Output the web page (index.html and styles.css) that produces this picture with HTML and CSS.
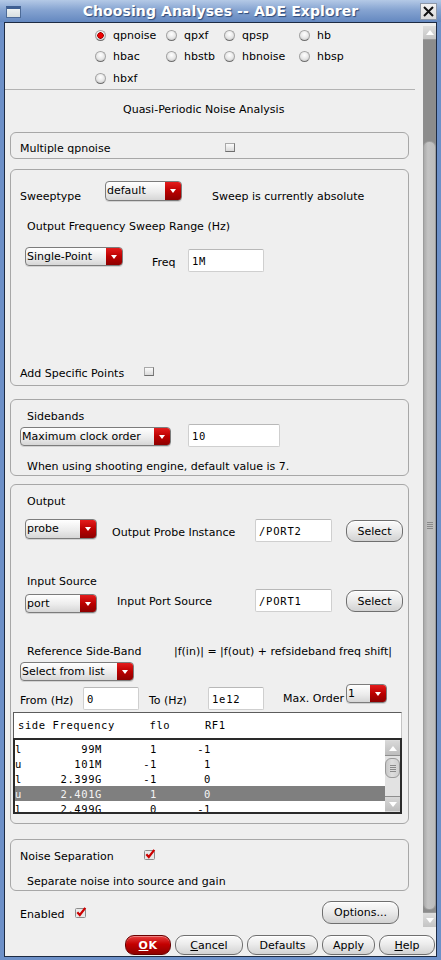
FILE: index.html
```html
<!DOCTYPE html>
<html>
<head>
<meta charset="utf-8">
<title>Choosing Analyses -- ADE Explorer</title>
<link rel="stylesheet" href="styles.css">
</head>
<body>
<div class="window">
  <div class="titlebar">
    <span class="wicon"></span>
    <span class="title">Choosing Analyses -- ADE Explorer</span>
    <span class="close">
      <svg width="15" height="15" viewBox="0 0 15 15"><path d="M3 3 L12 12 M12 3 L3 12" stroke="#111" stroke-width="2" fill="none"/></svg>
    </span>
  </div>
  <div class="outer">
    <div class="frame">
      <div class="main">
        <div class="scroll">
          <div class="radios">
            <label class="radio"><span class="rb on"></span>qpnoise</label>
            <label class="radio"><span class="rb"></span>qpxf</label>
            <label class="radio"><span class="rb"></span>qpsp</label>
            <label class="radio"><span class="rb"></span>hb</label>
            <label class="radio"><span class="rb"></span>hbac</label>
            <label class="radio"><span class="rb"></span>hbstb</label>
            <label class="radio"><span class="rb"></span>hbnoise</label>
            <label class="radio"><span class="rb"></span>hbsp</label>
            <label class="radio"><span class="rb"></span>hbxf</label>
          </div>
          <div class="sep"></div>
          <div class="heading">Quasi-Periodic Noise Analysis</div>

          <div class="box box1">
            <span class="lbl w-multi c2">Multiple qpnoise</span>
            <span class="cb"></span>
          </div>

          <div class="box box2">
            <div class="row r-sweep">
              <span class="lbl w-sweep pt7">Sweeptype</span>
              <span class="dd w77 h20"><span class="v">default</span><span class="a"></span></span>
              <span class="lbl ml30 pt7">Sweep is currently absolute</span>
            </div>
            <div class="line ind mt17">Output Frequency Sweep Range (Hz)</div>
            <div class="row r-single">
              <span class="dd w98 h19 ml5"><span class="v">Single-Point</span><span class="a"></span></span>
              <span class="lbl w-freq pt7">Freq</span>
              <span class="inp w76 mt2">1M</span>
            </div>
            <div class="row r-add">
              <span class="lbl w-add c4">Add Specific Points</span>
              <span class="cb"></span>
            </div>
          </div>

          <div class="box box3">
            <div class="line ind mt8">Sidebands</div>
            <div class="row r-side">
              <span class="dd w151 h19 mt3"><span class="v">Maximum clock order</span><span class="a"></span></span>
              <span class="inp w92 ml17">10</span>
            </div>
            <div class="line ind mt11">When using shooting engine, default value is 7.</div>
          </div>

          <div class="box box4">
            <div class="line ind mt8">Output</div>
            <div class="row r-io mt13">
              <span class="dd w72 h20 ml5"><span class="v">probe</span><span class="a"></span></span>
              <span class="lbl w-probe ml15 pt5">Output Probe Instance</span>
              <span class="inp w77">/PORT2</span>
              <span class="btn sel">Select</span>
            </div>
            <div class="line ind mt31">Input Source</div>
            <div class="row r-io mt3">
              <span class="dd w72 h19 ml5 mt5"><span class="v">port</span><span class="a"></span></span>
              <span class="lbl w-port ml20 pt4">Input Port Source</span>
              <span class="inp w77">/PORT1</span>
              <span class="btn sel">Select</span>
            </div>
            <div class="line ind mt31 refrow">
              <span class="w-ref">Reference Side-Band</span>
              <span>|f(in)| = |f(out) + refsideband freq shift|</span>
            </div>
            <div class="row mt6">
              <span class="dd w114 h19"><span class="v">Select from list</span><span class="a"></span></span>
            </div>
            <div class="row r-range">
              <span class="lbl w-from pt8">From (Hz)</span>
              <span class="inp w56 mt3">0</span>
              <span class="lbl w-to ml10 pt8">To (Hz)</span>
              <span class="inp w56 mt3">1e12</span>
              <span class="lbl w-max ml19 pt6">Max. Order</span>
              <span class="dd w41 h19"><span class="v">1</span><span class="a"></span></span>
            </div>
            <div class="table">
              <div class="thead">side Frequency     flo     RF1</div>
              <div class="list">
                <div class="rows">
                  <div class="tr"><span>l</span><span class="r">99M</span><span class="r">1</span><span class="r">-1</span></div>
                  <div class="tr"><span>u</span><span class="r">101M</span><span class="r">-1</span><span class="r">1</span></div>
                  <div class="tr"><span>l</span><span class="r">2.399G</span><span class="r">-1</span><span class="r">0</span></div>
                  <div class="tr hl"><span>u</span><span class="r">2.401G</span><span class="r">1</span><span class="r">0</span></div>
                  <div class="tr"><span>l</span><span class="r">2.499G</span><span class="r">0</span><span class="r">-1</span></div>
                </div>
                <div class="lbar">
                  <span class="larr up"></span>
                  <span class="ltrack"><span class="lthumb"><span class="grip"></span></span></span>
                  <span class="larr down"></span>
                </div>
              </div>
            </div>
          </div>

          <div class="box box5">
            <div class="row r-noise">
              <span class="lbl w-add c4">Noise Separation</span>
              <span class="cbx"><svg width="12" height="11" viewBox="0 0 12 11"><rect x="0.5" y="1.5" width="10" height="9" rx="1" fill="#e9e9e9" stroke="#8c8c8c"/><path d="M2.3 5.2 L4.8 8 L10.3 0.8" stroke="#cc0000" stroke-width="2.2" fill="none"/></svg></span>
            </div>
            <div class="line ind mt12">Separate noise into source and gain</div>
          </div>

          <div class="row r-enabled">
            <span class="lbl w-enabled c4">Enabled</span>
            <span class="cbx"><svg width="12" height="11" viewBox="0 0 12 11"><rect x="0.5" y="1.5" width="10" height="9" rx="1" fill="#e9e9e9" stroke="#8c8c8c"/><path d="M2.3 5.2 L4.8 8 L10.3 0.8" stroke="#cc0000" stroke-width="2.2" fill="none"/></svg></span>
            <span class="btn opt">Options...</span>
          </div>
        </div>
        <div class="vbar">
          <span class="varr up"></span>
          <span class="vtrack"><span class="vthumb"><span class="grip"></span></span></span>
          <span class="varr down"></span>
        </div>
      </div>
      <div class="actions">
        <span class="btn ok"><u>O</u>K</span>
        <span class="btn b-cancel"><u>C</u>ancel</span>
        <span class="btn b-def">Defaults</span>
        <span class="btn b-apply">Apply</span>
        <span class="btn b-help"><u>H</u>elp</span>
      </div>
    </div>
  </div>
</div>
</body>
</html>
```

FILE: styles.css
```css
* { box-sizing: border-box; }
html, body { margin: 0; padding: 0; }
body {
  width: 441px; height: 960px; overflow: hidden;
  font-family: "DejaVu Sans", sans-serif; font-size: 11px; color: #000;
  background: #6d90c8;
}
.window { width: 441px; height: 960px; display: flex; flex-direction: column; }

/* title bar */
.titlebar {
  height: 22px; display: flex; align-items: center;
  background: linear-gradient(#b4c9e6, #86a4d1 45%, #6488c0);
  padding: 0 4px 0 6px;
}
.wicon {
  width: 15px; height: 12px; margin-top: 1px; flex-shrink: 0;
  border: 1px solid #4d6b98; border-top: 3px solid #3f5f92;
  background: linear-gradient(#eef2f2, #d8dfe0);
}
.title {
  flex: 1; text-align: center; color: #fff;
  font-weight: bold; font-size: 14px; letter-spacing: 0.1px;
  text-shadow: 1px 1px 1px #2d4a7a;
}
.close {
  width: 17px; height: 17px; margin-top: 1px; flex-shrink: 0;
  display: flex; align-items: center; justify-content: center;
  background: linear-gradient(#f2f2f2, #dcdcdc);
  border: 1px solid #8d98a8;
}

.outer { flex: 1; padding: 0 4px 3px 4px; display: flex; }
.frame {
  flex: 1; display: flex; flex-direction: column;
  border: 1px solid #1d2b43; background: #efefef;
}
.main { height: 907px; display: flex; }
.scroll { width: 418px; height: 907px; overflow: hidden; }

/* vertical scrollbar */
.vbar { width: 13px; padding: 3px 0 3px 0; display: flex; flex-direction: column; }
.varr {
  height: 14px; display: flex; align-items: center; justify-content: center;
  background: linear-gradient(#dedede, #c4c4c4);
  border-bottom: 1px solid #9a9a9a;
}
.varr.down { height: 15px; border-bottom: 0; border-top: 1px solid #9a9a9a; }
.varr.up::after { content: ""; border-left: 4px solid transparent; border-right: 4px solid transparent; border-bottom: 5px solid #fff; }
.varr.down::after { content: ""; border-left: 4px solid transparent; border-right: 4px solid transparent; border-top: 5px solid #fff; }
.vtrack { flex: 1; background: #8c8c8c; display: flex; flex-direction: column; }
.vthumb {
  margin-top: 101px; height: 769px;
  border-radius: 6px; border: 1px solid #9c9c9c;
  background: linear-gradient(90deg, #ababab, #c3c3c3 35%, #bcbcbc);
  display: flex; align-items: center; justify-content: center;
}
.grip {
  width: 6px; height: 7px;
  background: repeating-linear-gradient(#8a8a8a 0 1px, transparent 1px 2px);
}

/* radios */
.radios {
  display: grid; padding: 1px 0 0 90px;
  grid-template-columns: 71px 58px 75px 70px;
  grid-template-rows: 22px 21px 22px;
}
.radio { display: flex; align-items: center; gap: 7px; white-space: nowrap; }
.rb {
  width: 11px; height: 11px; border-radius: 50%; flex-shrink: 0;
  border: 1px solid #a3a3a3; border-bottom-color: #6f6f6f;
  background: radial-gradient(circle at 50% 35%, #ffffff, #e6e6e6 55%, #bababa);
}
.rb.on {
  background: radial-gradient(circle at 50% 50%, #f00000 0 2px, #a00000 3px, transparent 3.5px),
              radial-gradient(circle at 50% 35%, #ffffff, #e6e6e6 55%, #bababa);
}
.sep { width: 410px; height: 1px; background: #b3b3b3; }
.heading { padding: 13px 0 16px 118px; line-height: 13px; }

/* group boxes */
.box { margin: 0 14px 0 5px; border: 1px solid #a7a7a7; border-radius: 6px; padding-left: 9px; }
.box1 { height: 27px; padding-top: 3px; display: flex; align-items: center; margin-top: 0; }
.box2 { margin-top: 10px; padding-bottom: 7px; }
.box3 { margin-top: 13px; padding-bottom: 4px; }
.box4 { margin-top: 8px; padding-bottom: 9px; }
.box5 { margin-top: 15px; padding-bottom: 4px; }

.row { display: flex; align-items: flex-start; }
.line { line-height: 13px; height: 13px; padding-top: 2px; white-space: nowrap; }
.ind { padding-left: 7px; }
.lbl { line-height: 13px; white-space: nowrap; flex-shrink: 0; }
.c2 { padding-top: 2px; }
.c4 { padding-top: 4px; }

.r-sweep { margin-top: 11px; height: 20px; }
.r-single { margin-top: 16px; height: 25px; }
.r-add { margin-top: 93px; height: 13px; align-items: center; }
.r-side { margin-top: 3px; height: 23px; }
.r-io { height: 23px; }
.r-range { margin-top: 3px; height: 26px; }
.r-noise { margin-top: 8px; height: 13px; align-items: center; }
.r-enabled { margin-top: 10px; height: 23px; align-items: center; padding-left: 15px; padding-right: 24px; }

.refrow { display: flex; }
.w-ref { width: 147px; }
.w-multi { width: 205px; }
.w-sweep { width: 85px; }
.w-freq { width: 36px; padding-left: 29px; box-sizing: content-box; }
.w-add { width: 124px; }
.w-probe { width: 143px; }
.w-port { width: 138px; }
.w-from { width: 63px; }
.w-to { width: 59px; }
.w-max { width: 63px; }
.w-enabled { width: 55px; }

.mt2 { margin-top: 2px; } .mt3 { margin-top: 3px; } .mt5 { margin-top: 5px; }
.mt6 { margin-top: 6px; } .mt8 { margin-top: 8px; } .mt11 { margin-top: 11px; }
.mt12 { margin-top: 12px; } .mt13 { margin-top: 13px; } .mt17 { margin-top: 17px; }
.mt31 { margin-top: 31px; }
.ml5 { margin-left: 5px; } .ml10 { margin-left: 10px; } .ml15 { margin-left: 15px; }
.ml17 { margin-left: 17px; } .ml19 { margin-left: 19px; } .ml20 { margin-left: 20px; }
.ml30 { margin-left: 30px; }
.pt4 { padding-top: 6px; } .pt5 { padding-top: 7px; } .pt6 { padding-top: 8px; }
.pt7 { padding-top: 9px; } .pt8 { padding-top: 10px; }

/* checkbox */
.cb {
  width: 10px; height: 9px; border: 1px solid #a9a9a9; flex-shrink: 0;
  border-right-color: #7b7b7b; border-bottom-color: #6e6e6e;
  background: linear-gradient(#fbfbfb, #dadada);
}
.cbx { width: 12px; height: 11px; display: flex; flex-shrink: 0; }

/* dropdown */
.dd {
  display: flex; border: 1px solid #7c7c7c; border-radius: 4px; overflow: hidden; flex-shrink: 0;
  background: linear-gradient(#ffffff, #ececec 55%, #d6d6d6);
  box-shadow: 0 1px 0 rgba(0,0,0,0.12);
}
.dd .v { flex: 1; padding-left: 1px; padding-top: 1px; line-height: 16px; white-space: nowrap; }
.dd .a {
  width: 16px; display: flex; align-items: center; justify-content: center;
  background: linear-gradient(#e41c1c, #bb0000 50%, #8d0000);
}
.dd .a::after { content: ""; border-left: 3.5px solid transparent; border-right: 3.5px solid transparent; border-top: 4px solid #fff; }
.w41 { width: 41px; } .w72 { width: 72px; } .w77 { width: 77px; } .w98 { width: 98px; }
.w114 { width: 114px; } .w151 { width: 151px; }
.h19 { height: 19px; } .h20 { height: 20px; }

/* inputs */
.inp {
  height: 23px; background: #fff; padding-left: 3px; flex-shrink: 0;
  border: 1px solid #cfcfcf; border-top-color: #b8b8b8; border-radius: 2px;
  font-family: "DejaVu Sans Mono", monospace; font-size: 10.5px; letter-spacing: 0.8px;
  line-height: 22px; white-space: nowrap;
}
.w56 { width: 56px; } .w76 { width: 76px; } .w92 { width: 92px; }

/* buttons */
.btn {
  display: flex; align-items: center; justify-content: center; flex-shrink: 0;
  border: 1px solid #6f6f6f; border-radius: 9px;
  background: linear-gradient(#fbfbfb, #ececec 45%, #d2d2d2);
  box-shadow: inset 0 1px 0 #fff;
  white-space: nowrap;
}
.sel { width: 57px; height: 22px; margin-left: 14px; margin-top: 1px; }
.opt { width: 77px; height: 23px; margin-left: auto; }

.actions { height: 26px; padding: 5px 1px 0 0; display: flex; justify-content: flex-end; gap: 4px; }
.actions .btn { height: 20px; }
.ok {
  width: 46px; color: #fff; font-weight: bold; letter-spacing: 0.5px;
  border-color: #6a0000;
  background: linear-gradient(#e84040, #c40000 45%, #8e0000);
  box-shadow: inset 0 1px 0 rgba(255,255,255,0.35);
}
.b-cancel { width: 68px; }
.b-def { width: 71px; }
.b-apply { width: 53px; }
.b-help { width: 56px; }

/* table */
.table { margin: 2px 0 0 -7px; width: 389px; }
.thead {
  height: 26px; background: #fff;
  border-top: 1px solid #5c5c5c; border-left: 1px solid #5c5c5c; border-right: 1px solid #c4c4c4;
  padding-left: 4px; line-height: 24px; white-space: pre;
  font-family: "DejaVu Sans Mono", monospace; font-size: 10.5px; letter-spacing: 0.6px;
}
.list {
  height: 76px; border: 2px solid #2a2a2a; background: #fff;
  display: flex; overflow: hidden;
}
.rows { flex: 1; padding-top: 1px; font-family: "DejaVu Sans Mono", monospace; font-size: 10.5px; letter-spacing: 0.6px; }
.tr { height: 15px; line-height: 17px; display: grid; grid-template-columns: 40px 47px 55px 54px; white-space: nowrap; }
.tr .r { text-align: right; }
.tr.hl { background: #7f7f7f; color: #f4f4f4; }
.lbar { width: 15px; display: flex; flex-direction: column; padding: 1px 0; background: #dcdcdc; }
.larr {
  height: 15px; display: flex; align-items: center; justify-content: center;
  background: linear-gradient(#d8d8d8, #bdbdbd);
  border-bottom: 1px solid #8e8e8e;
}
.larr.down { border-bottom: 0; border-top: 1px solid #8e8e8e; }
.larr.up::after { content: ""; border-left: 4px solid transparent; border-right: 4px solid transparent; border-bottom: 5px solid #fff; }
.larr.down::after { content: ""; border-left: 4px solid transparent; border-right: 4px solid transparent; border-top: 5px solid #fff; }
.ltrack { flex: 1; display: flex; flex-direction: column; background: #e2e2e2; }
.lthumb {
  margin-top: 2px; height: 20px; border-radius: 6px; border: 1px solid #9a9a9a;
  background: linear-gradient(90deg, #c7c7c7, #dedede 45%, #cfcfcf);
  display: flex; align-items: center; justify-content: center;
}
```
